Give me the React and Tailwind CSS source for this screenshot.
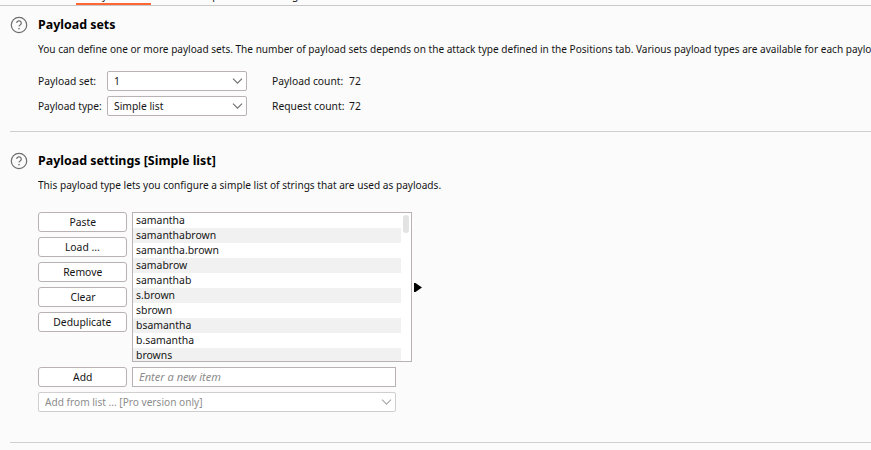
import React from 'react';

const items = ['samantha', 'samanthabrown', 'samantha.brown', 'samabrow', 'samanthab', 's.brown', 'sbrown', 'bsamantha', 'b.samantha', 'browns'];

function Help() {
  return (
    <svg className="block h-[18px] w-[18px] shrink-0" viewBox="0 0 18 18" fill="none" stroke="#6e6e6e">
      <circle cx="9" cy="9" r="7.7" strokeWidth="1.2" />
      <path d="M6.7 7.1a2.3 2.2 0 1 1 3.5 1.8c-.8.5-1.2.8-1.2 1.6" strokeWidth="1.2" />
      <path d="M9 11.9v1.4" strokeWidth="1.4" />
    </svg>
  );
}

function Chevron({ className }) {
  return (
    <svg className={`block h-[6px] w-[11px] shrink-0 ${className}`} viewBox="0 0 11 6" fill="none" stroke="currentColor">
      <path d="M1 .7 5.5 5.2 10 .7" strokeWidth="1.1" />
    </svg>
  );
}

// Condensed interface text
function T({ children, className = 'scale-x-[0.895]' }) {
  return <span className={`block w-fit origin-left ${className}`}>{children}</span>;
}

function Heading({ children }) {
  return (
    <div className="flex items-start gap-2.5">
      <Help />
      <h2 className="-mt-px h-[18px] origin-left scale-x-[0.955] text-[13px] font-bold leading-[18px] text-black">{children}</h2>
    </div>
  );
}

function Select({ children }) {
  return (
    <div className="flex h-5 w-[140px] items-center justify-between rounded-[2px] border border-[#b8b2b4] bg-white pl-1.5 pr-[3px]">
      <T>{children}</T>
      <Chevron className="text-[#6e6e6e]" />
    </div>
  );
}

function Button({ children }) {
  return (
    <button className="flex h-5 w-[89px] shrink-0 items-center justify-center rounded-[3px] border border-[#b8b2b4] bg-white">
      <span className="scale-x-[0.9]">{children}</span>
    </button>
  );
}

export default function App() {
  return (
    <div className="h-[450px] w-[871px] overflow-hidden whitespace-nowrap bg-[#fbfbfb] font-['Noto_Sans',sans-serif] text-[11.5px] leading-5 text-[#141414]">
      <nav className="flex h-1.5 flex-col justify-end overflow-hidden border-b border-[#c9c9c9]">
        <div className="flex h-[18px] shrink-0 pl-[90px]">
          <div className="w-[75px]"><T>Payloads</T></div>
          <div className="w-[99px]"><T>Resource pool</T></div>
          <T>Settings</T>
        </div>
        <div className="ml-[76px] h-0.5 w-[75px] shrink-0 bg-[#ff6633]" />
      </nav>
      <section className="ml-2.5 h-[126px] border-b border-[#cfcfcf] pt-2.5">
        <Heading>Payload sets</Heading>
        <div className="ml-7 mt-[5px]">
          <T className="scale-x-[0.8755]">You can define one or more payload sets. The number of payload sets depends on the attack type defined in the Positions tab. Various payload types are available for each payload set</T>
        </div>
        <div className="ml-7 mt-3 grid grid-cols-[69px_165px_77px_40px] gap-y-[5px]">
          <T>Payload set:</T>
          <Select>1</Select>
          <T>Payload count:</T>
          <T>72</T>
          <T className="scale-x-[0.88]">Payload type:</T>
          <Select>Simple list</Select>
          <T>Request count:</T>
          <T>72</T>
        </div>
      </section>
      <section className="ml-2.5 h-[311px] border-b border-[#cfcfcf] pt-5">
        <Heading>Payload settings [Simple list]</Heading>
        <div className="ml-7 mt-[5px]">
          <T className="scale-x-[0.879]">This payload type lets you configure a simple list of strings that are used as payloads.</T>
        </div>
        <div className="ml-7 mt-[17px] flex">
          <div className="mr-[5px] flex flex-col gap-[5px]">
            <Button>Paste</Button>
            <Button>Load ...</Button>
            <Button>Remove</Button>
            <Button>Clear</Button>
            <Button>Deduplicate</Button>
          </div>
          <div className="flex h-[150px] w-[280px] overflow-hidden border border-[#b8b2b4] bg-white">
            <ul className="w-[268px]">
              {items.map((t) => (
                <li key={t} className="h-[15px] pl-[3px] leading-[14px] even:bg-[#f1f1f1]"><T className="scale-x-[0.906]">{t}</T></li>
              ))}
            </ul>
            <div className="ml-0.5 mt-0.5 h-[18px] w-1.5 rounded-full bg-[#e3e3e3]" />
          </div>
          <svg className="ml-0.5 mt-[70px] h-[11px] w-2" viewBox="0 0 8 11"><path d="M0 1h1.5L8 5.5 1.5 10H0z" /></svg>
        </div>
        <div className="ml-7 mt-[5px] flex gap-[5px]">
          <Button>Add</Button>
          <div className="h-5 w-[264px] border border-[#b8b2b4] bg-white pl-1.5 italic leading-[18px] text-[#8c8c8c]">
            <T className="scale-x-[0.96]">Enter a new item</T>
          </div>
        </div>
        <div className="ml-7 mt-[5px] flex h-5 w-[358px] items-center justify-between rounded-[2px] border border-[#cfcfcf] bg-white pl-1.5 pr-[3px] text-[#8c8c8c]">
          <T className="scale-x-[0.88]">Add from list ... [Pro version only]</T>
          <Chevron className="text-[#a8a8a8]" />
        </div>
      </section>
    </div>
  );
}
